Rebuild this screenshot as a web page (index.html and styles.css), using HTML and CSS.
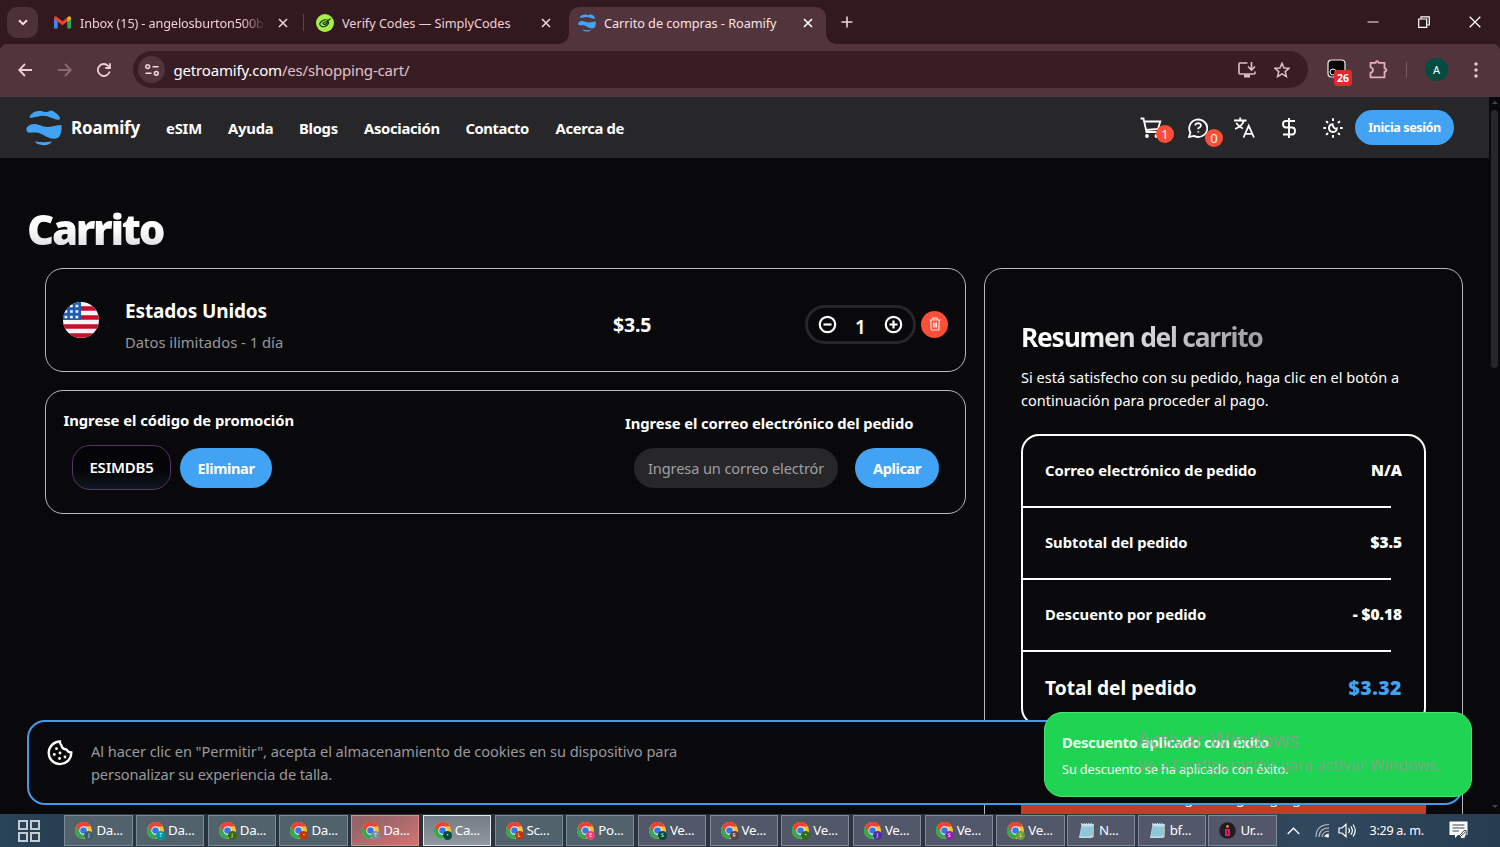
FILE: index.html
```html
<!DOCTYPE html>
<html lang="es">
<head>
<meta charset="utf-8">
<title>Carrito de compras - Roamify</title>
<link rel="stylesheet" href="styles.css">
</head>
<body>
<svg class="defs" width="0" height="0">
  <defs>
    <symbol id="globe" viewBox="0 0 36 36">
      <path d="M3 7.500C6 2 11 .2 17 1.500Q20 2.500 22.500 1.500Q25 -.5 28 1.700C32 4 34.500 7 34 9.500C28 10.500 24 5.800 17 5.800C12 5.800 8 8.500 3 7.500Z"/>
      <path d="M.5 18C4 12.500 10 13.500 15 15.500C22 19 28 15 35.500 15C36 21 35 25 32.500 27.500C25 31.500 19 25 13 23C8 21.500 3 24 1 21.500Q.2 20 .5 18Z"/>
      <path d="M8.500 31.500Q17 33 26 31.500Q23 36 16 35Q11 34.500 8.500 31.500Z"/>
    </symbol>
    <symbol id="close" viewBox="0 0 10 10"><path d="M1 1L9 9M9 1L1 9" fill="none" stroke="currentColor" stroke-width="1.600"/></symbol>
    <symbol id="chrome" viewBox="0 0 18 18">
      <circle cx="9" cy="9" r="9" fill="#fbc02d"/>
      <path d="M9 9L1.200 4.500A9 9 0 0 0 9 18L12 11Z" fill="#34a853"/>
      <path d="M1.200 4.500A9 9 0 0 1 16.800 4.500L9 5L5 11Z" fill="#ea4335"/>
      <circle cx="9" cy="9" r="4.400" fill="#fff"/><circle cx="9" cy="9" r="3.500" fill="#3478e8"/>
    </symbol>
    <symbol id="notepad" viewBox="0 0 18 18">
      <path d="M4 2H17L14.500 17H1Z" fill="#b5dde8"/><path d="M4 5H16L14 15H2Z" fill="#8fc7d8"/>
      <path d="M4 1V3.500M6.500 1V3.500M9 1V3.500M11.500 1V3.500M14 1V3.500" stroke="#e8f4f6" stroke-width="1"/>
      <path d="M17 2L16.500 16L14.500 17Z" fill="#d9d3b0"/>
    </symbol>
  </defs>
</svg>
<div class="window">
  <div class="tabstrip">
    <div class="tab-search"><svg width="10" height="7" viewBox="0 0 10 7"><path d="M1 1.200L5 5.200L9 1.200" fill="none" stroke="#f5dde1" stroke-width="2"/></svg></div>
    <div class="tab tab-mail">
      <svg class="fav-mail" width="17" height="13" viewBox="0 0 17 13"><path d="M0 2V12.500H3.700V5Z" fill="#4285f4"/><path d="M17 2V12.500H13.300V5Z" fill="#34a853"/><path d="M0 2Q0 0 2 .3L8.500 5.200L13.300 1.500V5.500L8.500 9.200L3.500 5.500L0 3Z" fill="#ea4335"/><path d="M13.300 1.500Q16 -1 17 2V3L13.300 5.800Z" fill="#fbbc04"/></svg>
      <span class="tab-title fade">Inbox (15) - angelosburton500b</span>
      <svg class="x" width="10" height="10"><use href="#close"/></svg>
    </div>
    <div class="tab tab-codes">
      <svg class="fav" width="18" height="18" viewBox="0 0 18 18"><circle cx="9" cy="9" r="9" fill="#a4ee4a"/><path d="M12 6.200Q9 5 6 7Q3 9 4 11Q5.500 13.500 9 12.500Q12.500 11 12.800 8M6.500 9.500Q8.500 7.500 11.500 7.500L14.500 4.500M7 9.800L8.800 10.800L12.500 7.500" fill="none" stroke="#173616" stroke-width="1.200"/></svg>
      <span class="tab-title">Verify Codes — SimplyCodes</span>
      <svg class="x" width="10" height="10"><use href="#close"/></svg>
    </div>
    <div class="tab tab-active">
      <svg class="fav" width="18" height="18" fill="#45a3f3"><use href="#globe"/></svg>
      <span class="tab-title">Carrito de compras - Roamify</span>
      <svg class="x" width="10" height="10"><use href="#close"/></svg>
    </div>
    <svg class="new-tab" width="12" height="12" viewBox="0 0 12 12"><path d="M6 .5V11.500M.5 6H11.500" stroke="#eed2d7" stroke-width="1.600"/></svg>
    <div class="win-controls">
      <svg width="12" height="12" viewBox="0 0 12 12"><path d="M.5 6H11.500" stroke="#dccbd0" stroke-width="1.200"/></svg>
      <svg width="12" height="12" viewBox="0 0 12 12" fill="none" stroke="#fff" stroke-width="1.200"><path d="M.7 3H8.700V11.300H.7Z"/><path d="M3 3V.8H11.300V9H8.700"/></svg>
      <svg width="12" height="12" viewBox="0 0 12 12"><path d="M.7 .7L11.300 11.300M11.300 .7L.7 11.300" stroke="#fff" stroke-width="1.300"/></svg>
    </div>
  </div>

  <div class="toolbar">
    <svg class="tb-back" width="14" height="14" viewBox="0 0 14 14" fill="none" stroke="#f0ccd3" stroke-width="1.800"><path d="M14 7H1.500M7 1L1.200 7L7 13"/></svg>
    <svg class="tb-fwd" width="14" height="14" viewBox="0 0 14 14" fill="none" stroke="#896a71" stroke-width="1.800"><path d="M0 7H12.500M7 1L12.800 7L7 13"/></svg>
    <svg class="tb-reload" width="14" height="14" viewBox="0 0 14 14" fill="none" stroke="#f0ccd3" stroke-width="1.800"><path d="M12.700 8.500A6 6 0 1 1 11.200 2.800L13 4.700M13 .3V5H8.300"/></svg>
    <div class="omnibox">
      <div class="site-info"><svg width="14" height="12" viewBox="0 0 14 12" fill="none" stroke="#f4dce0" stroke-width="1.500"><circle cx="2.700" cy="2.700" r="1.900"/><path d="M7.500 2.700H13.500M.5 9.300H6.500"/><circle cx="11.300" cy="9.300" r="1.900"/></svg></div>
      <span class="url"><b>getroamify.com</b>/es/shopping-cart/</span>
      <svg class="tb-install" width="18" height="16" viewBox="0 0 18 16" fill="none" stroke="#e0bfc6" stroke-width="1.600"><path d="M9.500 1H2Q1 1 1 2V11Q1 12 2 12H16Q17 12 17 11V9.500M13.500 0V7.500M10 4.500L13.500 8L17 4.500"/><path d="M6 14H12" stroke-width="3"/></svg>
      <svg class="tb-star" width="16" height="16" viewBox="0 0 16 16" fill="none" stroke="#e0bfc6" stroke-width="1.500"><path d="M8 1.200L10 6L15 6.300L11.200 9.600L12.400 14.600L8 11.900L3.600 14.600L4.800 9.600L1 6.300L6 6Z"/></svg>
    </div>
    <div class="ext"><svg width="20" height="20" viewBox="0 0 20 20"><rect x="1" y="1" width="17" height="17" rx="3.500" fill="#090607" stroke="#eee" stroke-width="1.200"/><circle cx="6" cy="13" r="3" fill="none" stroke="#fff"/></svg><span>26</span></div>
    <svg class="tb-puzzle" width="19" height="19" viewBox="0 0 19 19" fill="none" stroke="#e2afba" stroke-width="1.800" stroke-linejoin="round"><path d="M1.500 2.800H6.800Q6.800 1.200 8.200 1.200Q9.600 1.200 9.600 2.800H15.500V8.300Q17.300 8.300 17.300 10Q17.300 11.700 15.500 11.700V17.300H1.500V12.700Q4 12.300 4 10Q4 7.700 1.500 7.300Z"/></svg>
    <i class="tb-sep"></i>
    <span class="avatar">A</span>
    <svg class="tb-more" width="4" height="16" viewBox="0 0 4 16" fill="#e8c9cf"><circle cx="2" cy="2" r="1.700"/><circle cx="2" cy="8" r="1.700"/><circle cx="2" cy="14" r="1.700"/></svg>
  </div>

  <div class="viewport">
    <div class="page">
      <header class="site-header">
        <svg width="36" height="36" fill="#42a3f5"><use href="#globe"/></svg>
        <strong class="brand">Roamify</strong>
        <nav>
          <a class="n1">eSIM</a><a class="n2">Ayuda</a><a class="n3">Blogs</a><a class="n4">Asociación</a><a class="n5">Contacto</a><a class="n6">Acerca de</a>
        </nav>
        <div class="tools">
          <div class="tool"><svg width="22" height="22" viewBox="0 0 22 22" fill="none" stroke="#fff" stroke-width="1.800"><path d="M.5 1.500H3.500L6.500 15H18M4.300 4.500H20.300L18 12L6 13"/><circle cx="7" cy="19" r="1" fill="#fff"/><circle cx="16.500" cy="19" r="1" fill="#fff"/></svg><em class="c1">1</em></div>
          <div class="tool t2"><svg width="20" height="20" viewBox="0 0 20 20" fill="none" stroke="#fff" stroke-width="1.800"><path d="M1 19L2.400 14.500A9 8.700 0 1 1 6 17.900Z"/><path d="M7.300 7.500Q7.500 5.200 10.200 5.200Q13 5.300 12.900 7.600Q12.800 9 10.300 10.200V11.300M10.300 13.300V14.600"/></svg><em class="c2">0</em></div>
          <svg class="t3" width="21" height="21" viewBox="0 0 21 21" fill="none" stroke="#fff" stroke-width="1.800"><path d="M0 3.500H12.500M6.200 .5V3.500M2.200 6Q5 10 9 11.500M10 3.500Q8 9.500 1 12"/><path d="M9.500 20.500L14.700 8.800L20 20.500M11.300 16.800H18.200"/></svg>
          <svg class="t4" width="14" height="20" viewBox="0 0 14 20" fill="none" stroke="#fff" stroke-width="1.900"><path d="M7 0V20M13 3H4Q1 3 1 6Q1 9.500 4 9.500H10Q13 9.500 13 13Q13 16.500 10 16.500H1"/></svg>
          <svg class="t5" width="20" height="20" viewBox="0 0 20 20" fill="none" stroke="#fff" stroke-width="1.900"><path d="M10 .3V3M10 17V19.700M.3 10H3M17 10H19.700M3.100 3.100L5 5M15 15L16.900 16.900M16.900 3.100L15 5M5 15L3.100 16.900"/><path d="M9.500 6.200A3.900 3.900 0 1 0 13.800 10.500Q10.500 11.500 9.500 6.200Z"/></svg>
          <a class="login">Inicia sesión</a>
        </div>
      </header>

      <main>
        <h1>Carrito</h1>
        <div class="columns">
          <div class="left">
            <section class="card item">
              <svg class="flag" width="36" height="36" viewBox="0 0 36 36"><defs><clipPath id="round"><circle cx="18" cy="18" r="18"/></clipPath></defs><g clip-path="url(#round)"><path fill="#f8f3f7" d="M0 0H36V36H0Z"/><path d="M0 6.500H36M0 15.500H36M0 24.500H36M0 33.500H36" stroke="#c8102e" stroke-width="4.500"/><path fill="#1f5eae" d="M0 0H18V18H0Z"/><path d="M1.500 4H18M1.500 9.500H18M1.500 15H18" stroke="#e9f0fa" stroke-width="2.600" stroke-dasharray="2.800 2.700"/></g></svg>
              <div class="item-text"><h2>Estados Unidos</h2><p>Datos ilimitados - 1 día</p></div>
              <strong class="price">$3.5</strong>
              <div class="qty">
                <svg width="19" height="19" viewBox="0 0 19 19" fill="none" stroke="#fff" stroke-width="2.200"><circle cx="9.500" cy="9.500" r="7.700"/><path d="M5.500 9.500H13.500"/></svg>
                <span>1</span>
                <svg width="19" height="19" viewBox="0 0 19 19" fill="none" stroke="#fff" stroke-width="2.200"><circle cx="9.500" cy="9.500" r="7.700"/><path d="M5.500 9.500H13.500M9.500 5.500V13.500"/></svg>
              </div>
              <div class="trash"><svg width="12" height="14" viewBox="0 0 12 14" fill="none" stroke="#ffe4dc" stroke-width="1.200"><path d="M.5 3H11.500M3.800 2.800V1H8.200V2.800M1.700 3L2.200 13H9.800L10.300 3M4.500 5.500V10.500M7.500 5.500V10.500M6 5.500V10.500"/></svg></div>
            </section>
            <section class="card promo">
              <div class="promo-code"><label>Ingrese el código de promoción</label>
                <div class="row"><span class="code">ESIMDB5</span><a class="btn remove">Eliminar</a></div></div>
              <div class="promo-mail"><label>Ingrese el correo electrónico del pedido</label>
                <div class="row"><span class="field"><span>Ingresa un correo electrónico</span></span><a class="btn apply">Aplicar</a></div></div>
            </section>
          </div>
          <aside class="card summary">
            <h2>Resumen del carrito</h2>
            <p>Si está satisfecho con su pedido, haga clic en el botón a<br><span>continuación para proceder al pago.</span></p>
            <div class="totals">
              <div class="line"><span class="l1">Correo electrónico de pedido</span><b>N/A</b></div>
              <hr>
              <div class="line"><span class="l2">Subtotal del pedido</span><b>$3.5</b></div>
              <hr>
              <div class="line"><span class="l3">Descuento por pedido</span><b>- $0.18</b></div>
              <hr>
              <div class="line total"><span>Total del pedido</span><b>$3.32</b></div>
            </div>
            <div class="notice">Ningún cargo, agregue</div>
          </aside>
        </div>
      </main>

      <div class="cookie">
        <svg width="26" height="26" viewBox="0 0 26 26" fill="none" stroke="#fff" stroke-width="2.300"><path d="M13 1.500A11.300 11.300 0 1 0 24.300 12.500Q21 12.500 19.500 9.500Q15 9 14.500 5.500Q12.800 4 13 1.500Z"/><g fill="#fff" stroke="none"><circle cx="9.500" cy="8.700" r="1.400"/><circle cx="7.300" cy="14.500" r="1.400"/><circle cx="13" cy="13" r="1.400"/><circle cx="12.500" cy="18.500" r="1.400"/><circle cx="18" cy="17" r="1.400"/></g></svg>
        <p><span class="k1">Al hacer clic en "Permitir", acepta el almacenamiento de cookies en su dispositivo para</span><br><span class="k2">personalizar su experiencia de talla.</span></p>
      </div>
      <div class="toast"><strong>Descuento aplicado con éxito</strong><p>Su descuento se ha aplicado con éxito.</p></div>
      <div class="watermark"><p class="w1">Activar Windows</p><p class="w2">Ve a Configuración para activar Windows.</p></div>
    </div>
    <div class="scrollbar"><i class="up"></i><i class="thumb"></i><i class="down"></i></div>
  </div>

  <div class="taskbar">
    <svg class="views" width="22" height="22" viewBox="0 0 22 22" fill="none" stroke="#c4ccd3" stroke-width="2"><path d="M1 1H9V9H1ZM13 1H21V9H13ZM1 13H9V21H1ZM13 13H21V21H13Z"/></svg>
    <div class="apps">
      <div class="app"><div class="ico"><svg width="17" height="17"><use href="#chrome"/></svg><i class="slate">J</i></div>Da...</div>
      <div class="app"><div class="ico"><svg width="17" height="17"><use href="#chrome"/></svg><i class="teal">T</i></div>Da...</div>
      <div class="app"><div class="ico"><svg width="17" height="17"><use href="#chrome"/></svg><i class="green">J</i></div>Da...</div>
      <div class="app"><div class="ico"><svg width="17" height="17"><use href="#chrome"/></svg><i class="rust">•</i></div>Da...</div>
      <div class="app alert"><div class="ico"><svg width="17" height="17"><use href="#chrome"/></svg><i class="grey">T</i></div>Da...</div>
      <div class="app current"><div class="ico"><svg width="17" height="17"><use href="#chrome"/></svg><i class="pine">•</i></div>Ca...</div>
      <div class="app"><div class="ico"><svg width="17" height="17"><use href="#chrome"/></svg><i class="rust">L</i></div>Sc...</div>
      <div class="app"><div class="ico"><svg width="17" height="17"><use href="#chrome"/></svg><i class="pink">E</i></div>Po...</div>
      <div class="app violet"><div class="ico"><svg width="17" height="17"><use href="#chrome"/></svg><i class="pine">S</i></div>Ve...</div>
      <div class="app violet"><div class="ico"><svg width="17" height="17"><use href="#chrome"/></svg><i class="brown">R</i></div>Ve...</div>
      <div class="app violet"><div class="ico"><svg width="17" height="17"><use href="#chrome"/></svg><i class="green">•</i></div>Ve...</div>
      <div class="app violet"><div class="ico"><svg width="17" height="17"><use href="#chrome"/></svg><i class="indigo">J</i></div>Ve...</div>
      <div class="app violet"><div class="ico"><svg width="17" height="17"><use href="#chrome"/></svg><i class="purple">S</i></div>Ve...</div>
      <div class="app violet"><div class="ico"><svg width="17" height="17"><use href="#chrome"/></svg><i class="lime">L</i></div>Ve...</div>
      <div class="app violet tight"><div class="ico"><svg width="17" height="17"><use href="#notepad"/></svg></div>N...</div>
      <div class="app violet tight"><div class="ico"><svg width="17" height="17"><use href="#notepad"/></svg></div>bf...</div>
      <div class="app violet tight"><div class="ico"><svg width="17" height="17" viewBox="0 0 17 17"><circle cx="8.500" cy="8.500" r="8.300" fill="#211b22"/><path d="M6 7H11V14H6Z" fill="#d81e5b"/><circle cx="8.500" cy="4.500" r="1.400" fill="#e8902e"/><path d="M8 9H9V12H8Z" fill="#211b22"/></svg></div>Ur...</div>
    </div>
    <div class="tray">
      <svg class="s1" width="13" height="8" viewBox="0 0 13 8"><path d="M.7 7L6.500 1.200L12.300 7" fill="none" stroke="#fff" stroke-width="1.300"/></svg>
      <svg class="s2" width="15" height="15" viewBox="0 0 15 15" fill="none" stroke="#aeb8c4" stroke-width="1.200"><path d="M1 14Q1 2 14 1.500M4 14Q4.500 5 14 4.800M7 14Q7.500 8.500 14 8"/><path d="M10 14Q10 11.500 14 11" stroke="#fff"/><circle cx="12.500" cy="13" r="1.500" fill="#fff" stroke="none"/></svg>
      <svg class="s3" width="19" height="15" viewBox="0 0 19 15" fill="none" stroke="#fff" stroke-width="1.200"><path d="M1 5H4L8 1.300V13.700L4 10H1ZM10.500 5Q12.500 7.500 10.500 10M12.800 3.300Q16 7.500 12.800 11.700M15 1.500Q19.500 7.500 15 13.500"/></svg>
      <span class="clock">3:29 a. m.</span>
      <svg class="s4" width="19" height="19" viewBox="0 0 19 19"><path d="M.5 .5H18.500V14H9L6 17V14H.5Z" fill="#fff"/><path d="M3.500 4H15.500M3.500 7H15.500M3.500 10H10" stroke="#34475a" stroke-width="1.200"/><path d="M10 15L13 12Q15 8.500 17 9.500Q18.500 13 15.500 17.500Q12 18.500 10 15Z" fill="#fff" stroke="#34475a"/><path d="M11 16L16.500 11" stroke="#34475a"/></svg>
    </div>
  </div>
</div>
</body>
</html>
```
FILE: styles.css
```css
* { box-sizing: border-box; }
body { margin: 0; background: #09090b; font-family: "Noto Sans", "Open Sans", sans-serif; color: #fff; overflow: hidden; }
svg { display: block; flex: none; }
h1, h2, p { margin: 0; }
i, em { font-style: normal; }
.defs { position: absolute; }
.window { width: 1500px; height: 847px; display: flex; flex-direction: column; white-space: nowrap; }

/* Tabs */
.tabstrip { height: 44px; flex: none; display: flex; align-items: center; background: #32191f; }
.tab-search { width: 31px; height: 31px; margin: 1px 0 0 7px; border-radius: 10px; background: #4c3138; display: grid; place-items: center; }
.tab { display: flex; align-items: center; height: 37px; margin-top: 7px; padding-bottom: 6px; color: #f0ced5; font-size: 12.700px; letter-spacing: -.04px; }
.tab-title { overflow: hidden; padding-top: 1px; }
.x { margin-left: auto; color: #eed2d7; }
.fav { margin-right: 8px; }
.fav-mail { margin-right: 9px; }
.tab-mail { width: 250px; margin-left: 16px; padding-right: 16px; }
.fade { width: 185px; letter-spacing: -.13px; -webkit-mask-image: linear-gradient(90deg, #000 88%, transparent); mask-image: linear-gradient(90deg, #000 88%, transparent); }
.tab-codes { width: 266px; padding: 0 19px 6px 12px; margin-right: -1px; position: relative; }
.tab-codes::before { content: ""; position: absolute; left: -1px; top: 7px; width: 1px; height: 17px; background: #60424a; }
.tab-active { width: 257px; padding: 0 13px 6px 9px; background: #52343c; border-radius: 10px 10px 0 0; color: #f8e2e6; position: relative; }
.tab-active::before, .tab-active::after { content: ""; position: absolute; bottom: 0; width: 10px; height: 10px; }
.tab-active::before { left: -10px; background: radial-gradient(circle at 0 0, transparent 9.500px, #52343c 10px); }
.tab-active::after { right: -10px; background: radial-gradient(circle at 100% 0, transparent 9.500px, #52343c 10px); }
.tab-active .x { color: #fff; }
.new-tab { margin-left: 15px; }
.win-controls { margin-left: auto; margin-right: 19px; display: flex; gap: 39px; }

/* Address bar */
.toolbar { height: 53px; flex: none; display: flex; align-items: center; background: radial-gradient(circle at 8px 8px, #52343c 8px, #32191f 8.500px) 0 0 / 8px 8px no-repeat, radial-gradient(circle at 0 8px, #52343c 8px, #32191f 8.500px) 100% 0 / 8px 8px no-repeat, linear-gradient(#52343c, #52343c); padding: 0 0 2px 18px; }
.tb-fwd { margin-left: 26px; }
.tb-reload { margin-left: 25px; }
.omnibox { margin-left: 22px; width: 1175px; height: 37px; border-radius: 19px; background: #391d24; display: flex; align-items: center; padding: 0 18px 0 5px; }
.site-info { width: 27px; height: 27px; border-radius: 50%; background: #52343c; display: grid; place-items: center; }
.url { margin-left: 8.500px; font-size: 15px; color: #e0c3c8; letter-spacing: -.18px; }
.url b { font-weight: 400; color: #fff; }
.tb-install { margin-left: auto; }
.tb-star { margin-left: 18px; }
.ext { width: 26px; height: 26px; margin: 5px 0 0 19px; position: relative; }
.ext span { position: absolute; right: 1px; bottom: -1px; width: 18px; height: 16px; border-radius: 3px; background: #e2292f; font: 700 10.500px/16px "Noto Sans"; text-align: center; }
.tb-puzzle { margin-left: 16px; }
.tb-sep { width: 1px; height: 16px; background: #7b5962; margin-left: 18px; }
.avatar { width: 23px; height: 23px; margin-left: 18px; border-radius: 50%; background: #024d40; font-size: 11px; line-height: 23px; text-align: center; }
.tb-more { margin-left: 26px; }

/* Site */
.viewport { flex: 1; min-height: 0; display: flex; }
.page { width: 1489px; position: relative; overflow: hidden; }
.site-header { height: 61px; background: #27272a; display: flex; align-items: center; padding-left: 26px; }
.brand { width: 70px; margin-left: 9px; font-size: 17px; letter-spacing: -.1px; }
nav { display: flex; margin-left: 25px; font-size: 14.800px; font-weight: 700; letter-spacing: -.42px; }
.n1 { width: 62px; letter-spacing: -.2px; } .n2 { width: 71px; letter-spacing: -.2px; } .n3 { width: 65px; letter-spacing: -.3px; } .n4 { width: 101.500px; letter-spacing: -.3px; } .n5 { width: 90px; letter-spacing: -.45px; } .n6 { width: 70px; letter-spacing: -.33px; }
.tools { margin-left: auto; margin-right: 35px; display: flex; align-items: center; }
.tool { position: relative; }
.tool em { position: absolute; width: 18px; height: 18px; border-radius: 50%; background: #ff4e37; font-size: 13px; line-height: 18px; text-align: center; }
.c1 { left: 16px; top: 8px; } .c2 { left: 17px; top: 11px; }
.t2 { margin-left: 26px; } .t3 { margin-left: 26px; } .t4 { margin-left: 27px; } .t5 { margin-left: 27px; }
.login { width: 99px; height: 35px; margin-left: 12px; border-radius: 18px; background: #42a3f5; font-size: 12.600px; font-weight: 700; letter-spacing: -.4px; line-height: 36px; text-align: center; }

main { padding: 42px 26px 0 27px; }
h1 { height: 58px; line-height: 58px; font-size: 42px; font-weight: 900; letter-spacing: -2.350px; background: linear-gradient(#fff 45%, #d8d8dc 90%); -webkit-background-clip: text; background-clip: text; color: transparent; width: 160px; }
.columns { display: flex; gap: 18px; margin: 10px 0 0 18px; }
.left { width: 922px; display: flex; flex-direction: column; gap: 18px; }
.card { border: 1px solid #b9b9bc; border-radius: 18px; }
.item { height: 104px; display: flex; align-items: center; padding: 0 17px; }
.item .flag { margin-bottom: 1px; }
.item-text { width: 488px; margin: 11px 0 0 26px; }
.item h2 { font-size: 19px; line-height: 30px; font-weight: 700; letter-spacing: -.15px; }
.item p { font-size: 14.800px; line-height: 25px; margin-top: 4px; color: #97979d; }
.price { font-size: 19.500px; font-weight: 700; width: 192px; margin-top: 9px; letter-spacing: -.2px; }
.qty { width: 111px; height: 39px; margin-top: 8px; border: 3px solid #27272a; border-radius: 20px; display: flex; align-items: center; justify-content: space-between; padding: 0 10px; }
.qty span { font-size: 19px; font-weight: 600; padding-top: 5px; }
.trash { width: 27px; height: 27px; margin: 8px 0 0 5px; border-radius: 50%; background: #ff4e37; display: grid; place-items: center; }
.promo { height: 124px; display: flex; padding-left: 17.500px; }
.promo label { display: block; font-size: 14.800px; font-weight: 700; line-height: 22px; letter-spacing: -.04px; }
.promo-code { width: 561.500px; padding-top: 18px; }
.promo-mail { padding-top: 21px; }
.promo-mail label { letter-spacing: -.1px; }
.row { display: flex; align-items: center; padding-left: 9px; }
.promo-code .row { margin-top: 14px; padding-left: 8.500px; }
.promo-mail .row { margin-top: 14px; }
.code { width: 99px; height: 45px; border: 1px solid #5a3267; border-radius: 18px; background: linear-gradient(#050508 55%, #10171e); font-size: 15px; font-weight: 600; line-height: 43px; text-align: center; letter-spacing: -.2px; }
.btn { height: 40px; border-radius: 20px; background: #42a3f5; font-size: 14.600px; line-height: 40px; font-weight: 700; text-align: center; letter-spacing: -.4px; }
.remove { width: 92px; margin-left: 9px; }
.apply { width: 84px; margin-left: 17px; }
.field { width: 204px; height: 40px; border-radius: 20px; background: #27272a; padding: 0 14px; font-size: 14.600px; line-height: 40px; color: #9f9fa6; }
.field span { display: block; overflow: hidden; letter-spacing: -.12px; }

.summary { width: 479px; height: 660px; flex: none; padding: 49px 36px 0; }
.summary h2 { font-size: 26.400px; line-height: 38px; font-weight: 700; letter-spacing: -1.230px; background: linear-gradient(120deg, #fff 20%, #a0a0a5 85%); -webkit-background-clip: text; background-clip: text; color: transparent; width: 260px; }
.summary p { margin-top: 10px; font-size: 14.500px; line-height: 23px; letter-spacing: .04px; }
.totals { margin-top: 22px; border: 2px solid #fff; border-radius: 18px; height: 292px; }
.line { height: 70px; display: flex; align-items: center; justify-content: space-between; padding: 0 22px 2px; font-size: 14.800px; font-weight: 700; letter-spacing: -.04px; }
.line:first-child { height: 69.500px; }
.line b { font-weight: 900; font-size: 15.500px; }
.totals hr { width: 368px; height: 2px; margin: 0; border: 0; background: #fff; }
.total { height: 74px; padding-bottom: 2px; font-size: 19.200px; font-weight: 700; }
.total b { color: #42a3f5; font-size: 19.500px; letter-spacing: .45px; }
.notice { height: 120px; margin-top: 35px; background: #c63a2a; text-align: center; font-size: 14.500px; padding: 26px 0 0 32px; }

.cookie { position: absolute; left: 27px; top: 623px; width: 1436px; height: 85px; border: 2px solid #429be8; border-radius: 18px; background: #09090b; display: flex; padding: 18px 18px; }
.cookie p { margin: 0 0 0 18px; font-size: 14.600px; line-height: 23px; letter-spacing: -.055px; color: #99999f; }
.k2 { letter-spacing: -.11px; }
.toast { position: absolute; left: 1044px; top: 615px; width: 428px; height: 85px; border: 1px solid #48e276; border-radius: 18px; background: #20d453; padding: 18px 17px; color: #edfff1; }
.toast strong { display: block; font-size: 14.800px; line-height: 22px; font-weight: 700; letter-spacing: -.33px; }
.toast p { font-size: 12.800px; line-height: 22px; margin-top: 5px; letter-spacing: -.13px; }
.watermark { position: absolute; left: 1137px; top: 628px; color: rgba(145, 153, 145, .75); }
.w1 { font-size: 20.900px; line-height: 30px; }
.w2 { font-size: 15.650px; line-height: 20px; }
.scrollbar { width: 11px; background: #09090b; display: flex; flex-direction: column; align-items: center; }
.up, .down { border: 3px solid transparent; }
.up { border-bottom-color: #454548; margin-top: 1px; }
.thumb { width: 7px; height: 258px; margin-top: 6px; border-radius: 4px; background: #27272a; }
.down { border-top-color: #454548; margin-top: auto; margin-bottom: 3px; }

/* Taskbar */
.taskbar { height: 33px; flex: none; display: flex; align-items: center; background: linear-gradient(90deg, #29435a, #26323c 12%, #2d3440 70%, #30485e 88%, #273c50); }
.views { margin-left: 18px; }
.apps { display: flex; gap: 3.500px; margin-left: 24.400px; }
.app { width: 68.200px; height: 31px; border: 1px solid #7b8a93; background: #52626c; display: flex; align-items: center; padding: 0 0 1px 10px; gap: 3px; font-size: 13.300px; letter-spacing: -.3px; }
.violet { background: #52576a; border-color: #838998; }
.tight { margin-left: -1px; }
.alert { background: linear-gradient(155deg, #966469 20%, #d27473); border-color: #e88986; }
.current { background: linear-gradient(#737b84, #9298a0); border-color: #e4e8ec; }
.ico { width: 18px; position: relative; }
.ico i { position: absolute; right: 0; bottom: -1px; width: 9px; height: 9px; border-radius: 50%; font-size: 5px; line-height: 9px; text-align: center; letter-spacing: 0; }
.slate { background: #465a64; } .teal { background: #0097a7; } .green { background: #33691e; } .rust { background: #bf360c; }
.grey { background: #78909c; } .pine { background: #004d40; } .pink { background: #ec407a; } .brown { background: #5d4037; }
.indigo { background: #512da8; } .purple { background: #8e24aa; } .lime { background: #689f38; }
.tray { display: flex; align-items: center; }
.s1 { margin-left: 10px; } .s2 { margin-left: 15px; } .s3 { margin-left: 8px; }
.clock { width: 57px; margin: 0 0 1px 13px; font-size: 12.600px; letter-spacing: -.3px; }
.s4 { margin-left: 22px; }
```
